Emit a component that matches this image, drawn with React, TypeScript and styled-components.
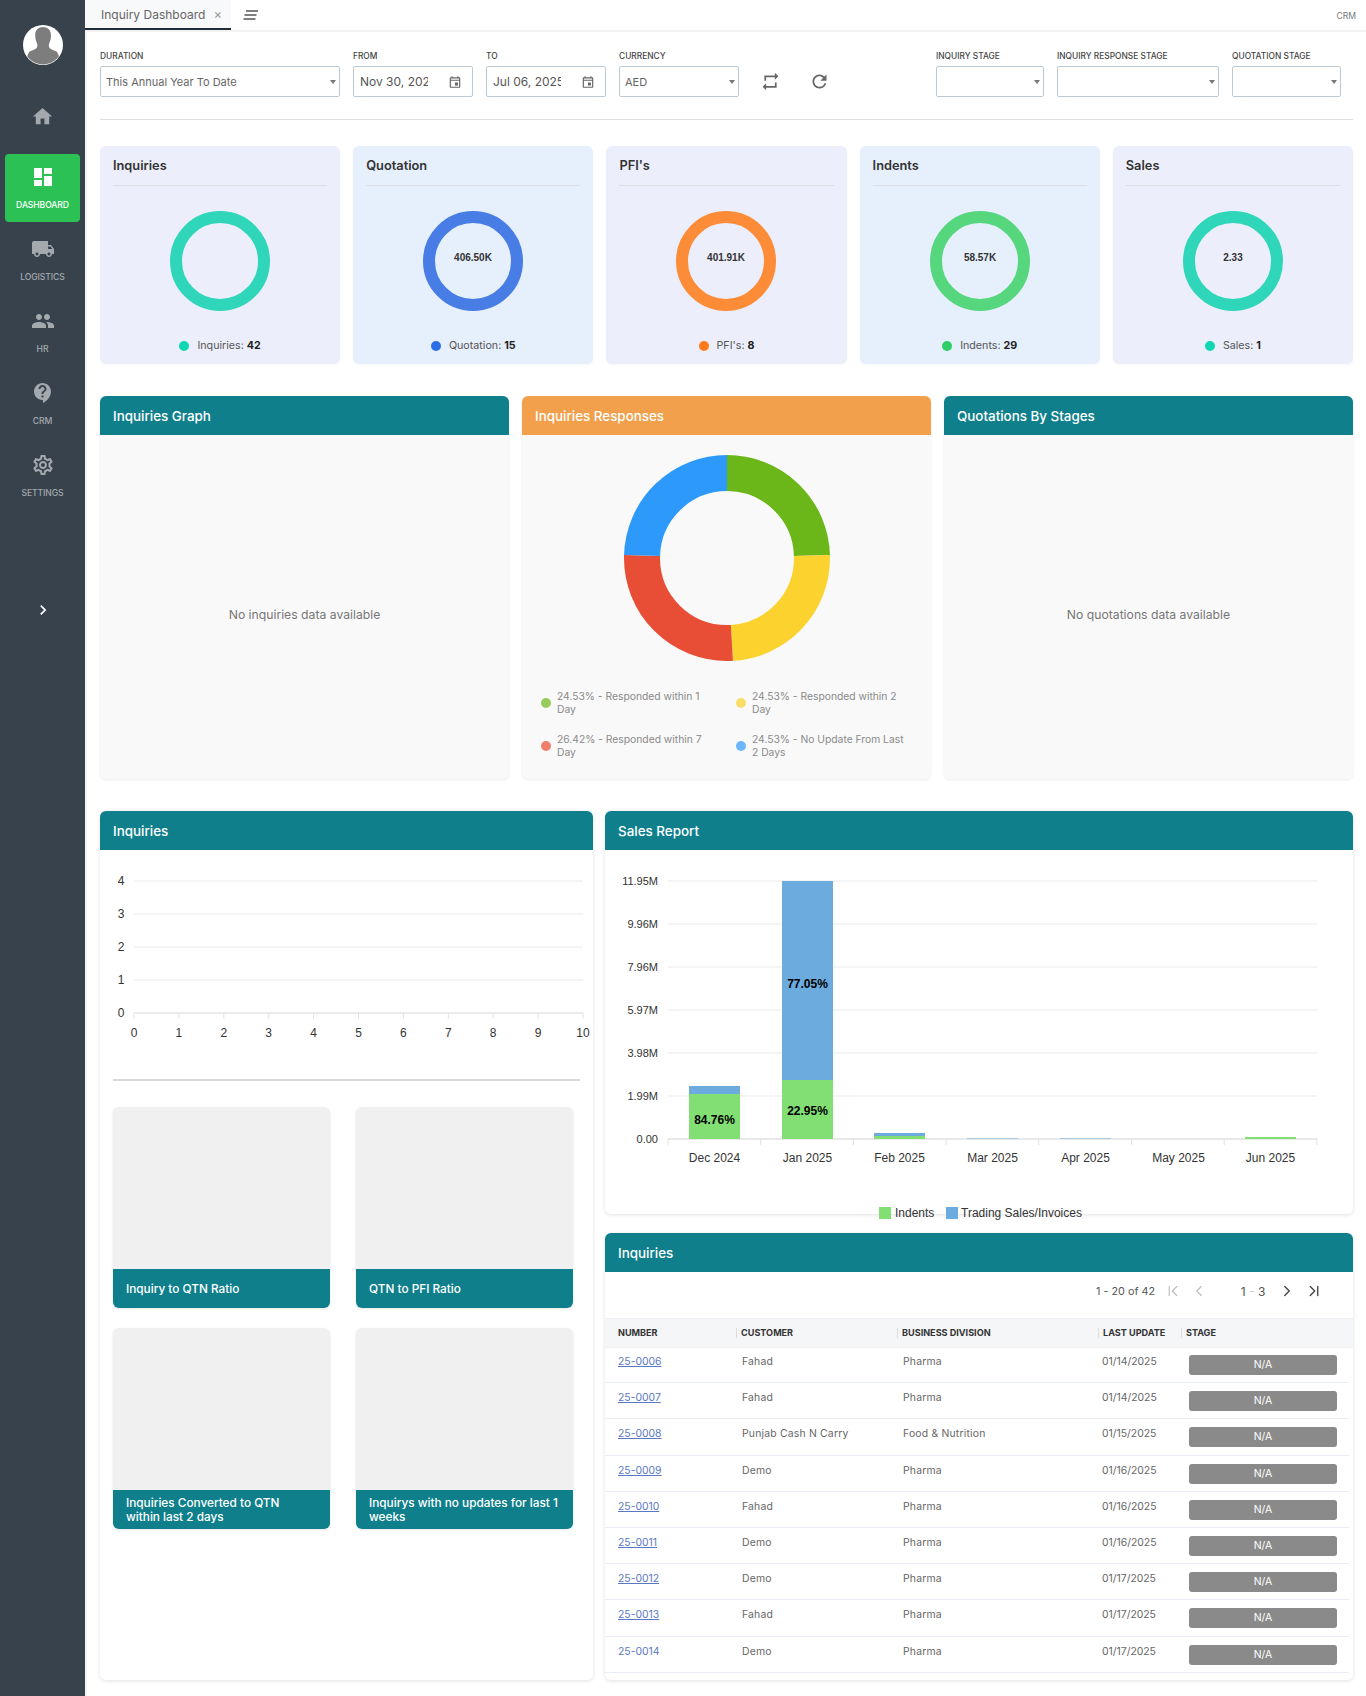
import React from "react";
import styled, { createGlobalStyle } from "styled-components";
import { ChevronFirst, ChevronLast, ChevronLeft, ChevronRight } from "lucide-react";
import {
  MdChevronRight,
  MdContactSupport,
  MdDashboard,
  MdHome,
  MdLocalShipping,
  MdOutlineEvent,
  MdOutlineSettings,
  MdPeople,
  MdRefresh,
  MdRepeat,
} from "react-icons/md";

const TEAL = "#107f8c";
const UI_FONT = `"Inter", "Noto Sans", sans-serif`;
const CHART_FONT = `"Liberation Sans", Arial, sans-serif`;

const GlobalStyle = createGlobalStyle`
  html, body {
    margin: 0;
    background: #fff;
  }
  body {
    font-family: ${UI_FONT};
    color: #333;
  }
  * {
    box-sizing: border-box;
  }
`;

const Shell = styled.div`
  display: flex;
  width: 1366px;
  min-height: 1696px;
`;

const Sidebar = styled.aside`
  flex: 0 0 85px;
  display: flex;
  flex-direction: column;
  align-items: center;
  background: #37424c;
  padding-top: 25px;
`;

const Avatar = styled.svg`
  width: 40px;
  height: 40px;
  margin-bottom: 34px;
`;

const NavItem = styled.div<{ $active?: boolean }>`
  width: 75px;
  height: 68px;
  margin-bottom: 4px;
  display: flex;
  flex-direction: column;
  align-items: center;
  justify-content: flex-start;
  padding-top: 11px;
  border-radius: 4px;
  background: ${({ $active }) => ($active ? "#2bc155" : "transparent")};
  color: ${({ $active }) => ($active ? "#fff" : "#a4a9ae")};
  font-size: 8.6px;
  font-weight: 500;
  letter-spacing: -0.1px;

  svg {
    display: block;
    margin-bottom: 11px;
  }
`;

const HomeLink = styled.div`
  height: 34px;
  margin-bottom: 21px;
  color: #a4a9ae;
  display: flex;
  align-items: center;
`;

const Collapse = styled.div`
  margin-top: 86px;
  color: #fff;
  display: flex;
`;

const Main = styled.main`
  flex: 1;
  min-width: 0;
  display: flex;
  flex-direction: column;
`;

const TopBar = styled.header`
  height: 32px;
  display: flex;
  align-items: flex-start;
  border-bottom: 2px solid #f3f3f3;
  padding-right: 10px;
`;

const Tab = styled.div`
  width: 146px;
  height: 30px;
  display: flex;
  align-items: center;
  padding-left: 16px;
  gap: 8px;
  background: #f8f9fa;
  border-bottom: 2px solid #1f2d3a;
  font-size: 12px;
  color: #666;
  white-space: nowrap;
`;

const TabClose = styled.span`
  font-size: 13px;
  color: #999;
  line-height: 1;
`;

const TabMenu = styled.svg`
  width: 16px;
  height: 10px;
  margin: 10px 0 0 12px;
`;

const ModuleName = styled.span`
  margin-left: auto;
  padding-top: 11px;
  font-size: 8.6px;
  color: #777;
`;

const Content = styled.div`
  flex: 1;
  border-left: 2px solid #f5f5f5;
  padding: 0 13px;
`;

const Filters = styled.div`
  display: flex;
  padding: 19px 12px 22px 0;
  border-bottom: 1px solid #dcdfe2;
`;

const FilterGroup = styled.div`
  display: flex;
  gap: 13px;
`;

const RightFilters = styled(FilterGroup)`
  margin-left: auto;
`;

const Field = styled.div<{ $width: number }>`
  width: ${({ $width }) => $width}px;
`;

const FieldLabel = styled.div`
  height: 11px;
  margin-bottom: 4px;
  font-size: 8.4px;
  line-height: 11px;
  font-weight: 500;
  color: #444;
  white-space: nowrap;
`;

const Control = styled.div`
  height: 31px;
  display: flex;
  align-items: center;
  padding: 0 6px 0 5px;
  border: 1px solid #bccad6;
  border-radius: 2px;
  font-size: 11px;
  color: #666;
  white-space: nowrap;
`;

const Caret = styled.span`
  margin: 0 -3px 0 auto;
  border-left: 3.5px solid transparent;
  border-right: 3.5px solid transparent;
  border-top: 4px solid #777;
`;

const DateValue = styled.span`
  width: 68px;
  margin-left: 1px;
  overflow: hidden;
  font-size: 12px;
  color: #555;
`;

const DateIcon = styled.span`
  margin-left: auto;
  margin-right: 4px;
  display: flex;
  color: #666;
`;

const Actions = styled.div`
  display: flex;
  align-items: center;
  gap: 28px;
  margin: 15px 0 0 21px;
  color: #666;
`;

const SummaryRow = styled.section`
  display: grid;
  grid-template-columns: repeat(5, 1fr);
  gap: 13px;
  margin-top: 26px;
`;

const SummaryCard = styled.div<{ $tint: string }>`
  height: 218px;
  padding: 0 13px;
  display: flex;
  flex-direction: column;
  align-items: center;
  border-radius: 6px;
  background: ${({ $tint }) => $tint};
  box-shadow: 0 1px 3px rgba(0, 0, 0, 0.04);
`;

const SummaryTitle = styled.div`
  width: 100%;
  height: 40px;
  padding-top: 11px;
  font-size: 12.8px;
  line-height: 18px;
  font-weight: 600;
  color: #333;
  border-bottom: 1px solid #dcdfe6;
`;

const Ring = styled.svg`
  width: 100px;
  height: 100px;
  margin-top: 25px;
`;

const SummaryLegend = styled.div`
  margin-top: 28px;
  display: flex;
  align-items: center;
  gap: 8px;
  font-size: 10.7px;
  color: #555;

  b {
    color: #222;
    font-weight: 700;
  }
`;

const Dot = styled.span<{ $color: string; $size?: number }>`
  flex: none;
  width: ${({ $size }) => $size ?? 10}px;
  height: ${({ $size }) => $size ?? 10}px;
  border-radius: 50%;
  background: ${({ $color }) => $color};
`;

const GraphRow = styled.section`
  display: grid;
  grid-template-columns: repeat(3, 1fr);
  gap: 13px;
  margin-top: 32px;
`;

const GraphPanel = styled.div`
  height: 383px;
  display: flex;
  flex-direction: column;
  background: #f9f9f9;
  border-radius: 6px;
  box-shadow: 0 1px 3px rgba(0, 0, 0, 0.08);
`;

const PanelHeader = styled.div<{ $color?: string }>`
  flex: none;
  height: 39px;
  display: flex;
  align-items: center;
  padding: 0 13px;
  border-radius: 6px 6px 0 0;
  background: ${({ $color }) => $color ?? TEAL};
  color: #fff;
  font-size: 13.4px;
  font-weight: 500;
`;

const EmptyBody = styled.div`
  flex: 1;
  display: flex;
  align-items: center;
  justify-content: center;
  padding-top: 14px;
  font-size: 12.2px;
  color: #777;
`;

const ResponseBody = styled.div`
  flex: 1;
  display: flex;
  flex-direction: column;
  align-items: center;
  padding-top: 20px;
`;

const ResponseDonut = styled.svg`
  width: 206px;
  height: 206px;
`;

const ResponseLegend = styled.div`
  width: 100%;
  margin-top: 29px;
  padding-left: 19px;
  display: grid;
  grid-template-columns: 195px 195px;
  row-gap: 17px;
`;

const ResponseItem = styled.div`
  display: flex;
  align-items: center;
  gap: 6px;
  font-size: 10.3px;
  line-height: 13px;
  color: #8a8a8a;
  white-space: nowrap;
`;

const LowerRow = styled.section`
  display: grid;
  grid-template-columns: 493px 748px;
  gap: 12px;
  margin-top: 32px;
`;

const Panel = styled.div`
  background: #fff;
  border-radius: 6px;
  box-shadow: 0 1px 4px rgba(0, 0, 0, 0.12);
`;

const LeftPanel = styled(Panel)`
  height: 869px;
`;

const ChartSvg = styled.svg`
  display: block;
  overflow: visible;
  font-family: ${CHART_FONT};
`;

const Divider = styled.hr`
  margin: 4px 13px 0;
  border: 0;
  border-top: 2px solid #d8d8d8;
  width: 467px;
`;

const RatioGrid = styled.div`
  display: grid;
  grid-template-columns: 217px 217px;
  column-gap: 26px;
  row-gap: 20px;
  padding: 26px 13px 0;
`;

const RatioCard = styled.div`
  height: 201px;
  display: flex;
  flex-direction: column;
  justify-content: flex-end;
  background: #f0f0f0;
  border-radius: 6px;
  box-shadow: 0 1px 3px rgba(0, 0, 0, 0.1);
`;

const RatioCaption = styled.div`
  height: 39px;
  display: flex;
  align-items: center;
  padding: 0 13px;
  background: ${TEAL};
  border-radius: 0 0 6px 6px;
  color: #fff;
  font-size: 11.8px;
  line-height: 14px;
  font-weight: 500;
  white-space: nowrap;
`;

const RightColumn = styled.div`
  display: flex;
  flex-direction: column;
  gap: 19px;
`;

const SalesPanel = styled(Panel)`
  height: 403px;
`;

const TablePanel = styled(Panel)`
  height: 447px;
`;

const Pager = styled.div`
  height: 47px;
  display: flex;
  align-items: center;
  justify-content: flex-end;
  padding: 0 30px 8px 0;
  font-size: 10.8px;
  color: #555;
  border-bottom: 1px solid #eef0f3;
`;

const PagerRange = styled.span`
  margin-right: 9px;
`;

const PagerIcon = styled.span<{ $disabled?: boolean; $gap?: number }>`
  display: flex;
  color: ${({ $disabled }) => ($disabled ? "#bbb" : "#444")};
  margin-left: ${({ $gap }) => $gap ?? 8}px;
`;

const PagerPages = styled.span`
  width: 70px;
  padding-left: 20px;
  text-align: center;
  font-size: 12px;
`;

const PagerDash = styled.span`
  color: #ccc;
`;

const TableHead = styled.div`
  display: grid;
  grid-template-columns: 131px 161px 201px 83px 1fr;
  height: 28px;
  align-items: center;
  background: #f5f6f8;
  box-shadow: 0 1px 1px rgba(0, 0, 0, 0.05);
  font-size: 9.1px;
  font-weight: 700;
  color: #333;
`;

const HeadCell = styled.div<{ $first?: boolean }>`
  height: 10px;
  line-height: 10px;
  padding-left: ${({ $first }) => ($first ? "13px" : "4px")};
  border-left: ${({ $first }) => ($first ? "0" : "1px solid #ddd")};
  white-space: nowrap;
`;

const TableRow = styled.div`
  display: grid;
  grid-template-columns: 135px 161px 199px 85px 1fr;
  height: 36.2px;
  margin-right: 4px;
  border-bottom: 1px solid #e8eef4;
  font-size: 10.4px;
  line-height: 14px;
  color: #666;
`;

const Cell = styled.div`
  padding: 8px 0 0 2px;
  letter-spacing: 0.2px;
  white-space: nowrap;
`;

const DateCell = styled(Cell)`
  letter-spacing: 0;
`;

const NumberCell = styled(Cell)`
  padding-left: 13px;
  letter-spacing: 0;
`;

const InquiryLink = styled.span<{ $plain?: boolean }>`
  color: #5a78c4;
  text-decoration: ${({ $plain }) => ($plain ? "none" : "underline")};
`;

const StageBadge = styled.div`
  width: 148px;
  height: 20px;
  margin: 8px 0 0 4px;
  display: flex;
  align-items: center;
  justify-content: center;
  background: #8a8a8a;
  border-radius: 3px;
  color: #fff;
  font-size: 10.4px;
`;

const summaries = [
  { title: "Inquiries", tint: "#eceffb", ring: "#2fd6b9", dot: "#10d7b2", label: "Inquiries:", count: 42 },
  { title: "Quotation", tint: "#e6effc", ring: "#477de5", dot: "#2a6fe8", label: "Quotation:", count: 15, value: "406.50K" },
  { title: "PFI's", tint: "#eceffb", ring: "#fd8c38", dot: "#ff7a1a", label: "PFI's:", count: 8, value: "401.91K" },
  { title: "Indents", tint: "#e6effc", ring: "#56d77e", dot: "#2dcf66", label: "Indents:", count: 29, value: "58.57K" },
  { title: "Sales", tint: "#eceffb", ring: "#2fd6b9", dot: "#10d7b2", label: "Sales:", count: 1, value: "2.33" },
];

const responseSlices = [
  { color: "#6bb618", pct: 24.53 },
  { color: "#fcd22f", pct: 24.53 },
  { color: "#e84e36", pct: 26.42 },
  { color: "#2d99fb", pct: 24.52 },
];

const responseLegend = [
  { color: "#97cd5d", lines: ["24.53% - Responded within 1", "Day"] },
  { color: "#fade68", lines: ["24.53% - Responded within 2", "Day"] },
  { color: "#ee7f6d", lines: ["26.42% - Responded within 7", "Day"] },
  { color: "#6cb6fb", lines: ["24.53% - No Update From Last", "2 Days"] },
];

const ratios = [
  ["Inquiry to QTN Ratio"],
  ["QTN to PFI Ratio"],
  ["Inquiries Converted to QTN", "within last 2 days"],
  ["Inquirys with no updates for last 1", "weeks"],
];

const rows = [
  ["25-0006", "Fahad", "Pharma", "01/14/2025"],
  ["25-0007", "Fahad", "Pharma", "01/14/2025"],
  ["25-0008", "Punjab Cash N Carry", "Food & Nutrition", "01/15/2025"],
  ["25-0009", "Demo", "Pharma", "01/16/2025"],
  ["25-0010", "Fahad", "Pharma", "01/16/2025"],
  ["25-0011", "Demo", "Pharma", "01/16/2025"],
  ["25-0012", "Demo", "Pharma", "01/17/2025"],
  ["25-0013", "Fahad", "Pharma", "01/17/2025"],
  ["25-0014", "Demo", "Pharma", "01/17/2025"],
];

const salesAxis = ["11.95M", "9.96M", "7.96M", "5.97M", "3.98M", "1.99M", "0.00"];

// bar coordinates are relative to the panel body, top = top of the bar, split = where green starts
const salesBars = [
  { month: "Dec 2024", x: 84, top: 236, split: 244, green: "84.76%", greenY: 274 },
  { month: "Jan 2025", x: 177, top: 31, split: 230, green: "22.95%", greenY: 265, blue: "77.05%" },
  { month: "Feb 2025", x: 269, top: 283, split: 286 },
  { month: "Mar 2025", x: 362, top: 288.5, split: 289 },
  { month: "Apr 2025", x: 455, top: 288.5, split: 289 },
  { month: "May 2025", x: 548, top: 289, split: 289 },
  { month: "Jun 2025", x: 640, top: 287, split: 287 },
];

const InquiriesChart = () => {
  const xs = Array.from({ length: 11 }, (_, i) => 34 + i * 44.9);
  return (
    <ChartSvg width={493} height={225}>
      {[4, 3, 2, 1].map((v, i) => (
        <line key={v} x1={34} x2={483} y1={31 + i * 33} y2={31 + i * 33} stroke="#f0f0f0" strokeWidth={1.5} />
      ))}
      <line x1={34} x2={483} y1={163} y2={163} stroke="#e4e4e4" strokeWidth={1.5} />
      {[4, 3, 2, 1, 0].map((v, i) => (
        <text key={v} x={21} y={35 + i * 33} fontSize={12} fill="#333" textAnchor="middle">
          {v}
        </text>
      ))}
      {xs.map((x, i) => (
        <g key={i}>
          <line x1={x} x2={x} y1={163} y2={169} stroke="#e4e4e4" />
          <text x={x} y={187} fontSize={12} fill="#333" textAnchor="middle">
            {i}
          </text>
        </g>
      ))}
    </ChartSvg>
  );
};

const SalesChart = () => (
  <ChartSvg width={748} height={364}>
    {salesAxis.map((label, i) => (
      <g key={label}>
        <line
          x1={63}
          x2={712}
          y1={31 + i * 43}
          y2={31 + i * 43}
          stroke={i === 6 ? "#e0e0e0" : "#f0f0f0"}
          strokeWidth={1.5}
        />
        <text x={53} y={35 + i * 43} fontSize={11} fill="#333" textAnchor="end">
          {label}
        </text>
      </g>
    ))}
    {Array.from({ length: 8 }, (_, i) => 63 + i * 92.7).map((x) => (
      <line key={x} x1={x} x2={x} y1={289} y2={295} stroke="#e0e0e0" />
    ))}
    {salesBars.map((bar) => (
      <g key={bar.month}>
        <rect x={bar.x} y={bar.top} width={51} height={bar.split - bar.top} fill="#6cabdd" />
        <rect x={bar.x} y={bar.split} width={51} height={289 - bar.split} fill="#82df74" />
        {bar.blue && (
          <text x={bar.x + 25.5} y={138} fontSize={12} fontWeight={700} fill="#000" textAnchor="middle">
            {bar.blue}
          </text>
        )}
        {bar.green && (
          <text x={bar.x + 25.5} y={bar.greenY} fontSize={12} fontWeight={700} fill="#000" textAnchor="middle">
            {bar.green}
          </text>
        )}
        <text x={bar.x + 25.5} y={312} fontSize={12} fill="#333" textAnchor="middle">
          {bar.month}
        </text>
      </g>
    ))}
    <rect x={274} y={357} width={12} height={12} fill="#82df74" />
    <text x={290} y={367} fontSize={12} fill="#333">
      Indents
    </text>
    <rect x={341} y={357} width={12} height={12} fill="#6cabdd" />
    <text x={356} y={367} fontSize={12} fill="#333">
      Trading Sales/Invoices
    </text>
  </ChartSvg>
);

const App = () => {
  let offset = 0;
  return (
    <Shell>
      <GlobalStyle />
      <Sidebar>
        <Avatar viewBox="0 0 40 40">
          <defs>
            <clipPath id="avatar-clip">
              <circle cx="20" cy="20" r="19.5" />
            </clipPath>
          </defs>
          <circle cx="20" cy="20" r="20" fill="#fff" />
          <path
            clipPath="url(#avatar-clip)"
            d="M20 2c-5.500 0-8 3.800-7.800 8.800.1 3 .7 5.200 1.500 7 .7 1.500 1 3.300.2 4.600-1 1.700-4.100 2.600-6.300 3.700-1.700.9-2.800 2.700-3.500 6.400V40h32v-7.500c-.7-3.700-1.800-5.500-3.500-6.400-2.200-1.100-5.300-2-6.300-3.700-.8-1.300-.5-3.100.2-4.600.8-1.800 1.400-4 1.500-7C28 5.800 25.500 2 20 2z"
            fill="#7d7d7d"
          />
        </Avatar>
        <HomeLink>
          <MdHome size={23} />
        </HomeLink>
        <NavItem $active>
          <MdDashboard size={24} />
          DASHBOARD
        </NavItem>
        <NavItem>
          <MdLocalShipping size={24} />
          LOGISTICS
        </NavItem>
        <NavItem>
          <MdPeople size={24} />
          HR
        </NavItem>
        <NavItem>
          <MdContactSupport size={24} />
          CRM
        </NavItem>
        <NavItem>
          <MdOutlineSettings size={24} />
          SETTINGS
        </NavItem>
        <Collapse>
          <MdChevronRight size={20} />
        </Collapse>
      </Sidebar>
      <Main>
        <TopBar>
          <Tab>
            Inquiry Dashboard
            <TabClose>×</TabClose>
          </Tab>
          <TabMenu viewBox="0 0 16 10">
            <path d="M3 1h12M1.500 5h12M0.500 9h12" stroke="#555" strokeWidth="1.300" fill="none" />
          </TabMenu>
          <ModuleName>CRM</ModuleName>
        </TopBar>
        <Content>
          <Filters>
            <FilterGroup>
              <Field $width={240}>
                <FieldLabel>DURATION</FieldLabel>
                <Control>
                  This Annual Year To Date
                  <Caret />
                </Control>
              </Field>
              <Field $width={120}>
                <FieldLabel>FROM</FieldLabel>
                <Control>
                  <DateValue>Nov 30, 2024</DateValue>
                  <DateIcon>
                    <MdOutlineEvent size={14} />
                  </DateIcon>
                </Control>
              </Field>
              <Field $width={120}>
                <FieldLabel>TO</FieldLabel>
                <Control>
                  <DateValue>Jul 06, 2025</DateValue>
                  <DateIcon>
                    <MdOutlineEvent size={14} />
                  </DateIcon>
                </Control>
              </Field>
              <Field $width={120}>
                <FieldLabel>CURRENCY</FieldLabel>
                <Control>
                  AED
                  <Caret />
                </Control>
              </Field>
            </FilterGroup>
            <Actions>
              <MdRepeat size={21} />
              <MdRefresh size={21} />
            </Actions>
            <RightFilters>
              <Field $width={108}>
                <FieldLabel>INQUIRY STAGE</FieldLabel>
                <Control>
                  <Caret />
                </Control>
              </Field>
              <Field $width={162}>
                <FieldLabel>INQUIRY RESPONSE STAGE</FieldLabel>
                <Control>
                  <Caret />
                </Control>
              </Field>
              <Field $width={109}>
                <FieldLabel>QUOTATION STAGE</FieldLabel>
                <Control>
                  <Caret />
                </Control>
              </Field>
            </RightFilters>
          </Filters>

          <SummaryRow>
            {summaries.map((s) => (
              <SummaryCard key={s.title} $tint={s.tint}>
                <SummaryTitle>{s.title}</SummaryTitle>
                <Ring viewBox="0 0 100 100">
                  <circle cx="50" cy="50" r="44" fill="none" stroke={s.ring} strokeWidth="12" />
                  {s.value && (
                    <text
                      x="50"
                      y="50"
                      fontFamily={CHART_FONT}
                      fontSize="10"
                      fontWeight="700"
                      fill="#333"
                      textAnchor="middle"
                    >
                      {s.value}
                    </text>
                  )}
                </Ring>
                <SummaryLegend>
                  <Dot $color={s.dot} />
                  <span>
                    {s.label} <b>{s.count}</b>
                  </span>
                </SummaryLegend>
              </SummaryCard>
            ))}
          </SummaryRow>

          <GraphRow>
            <GraphPanel>
              <PanelHeader>Inquiries Graph</PanelHeader>
              <EmptyBody>No inquiries data available</EmptyBody>
            </GraphPanel>
            <GraphPanel>
              <PanelHeader $color="#f2a04c">Inquiries Responses</PanelHeader>
              <ResponseBody>
                <ResponseDonut viewBox="0 0 206 206">
                  {responseSlices.map((slice) => {
                    const start = offset;
                    offset += slice.pct;
                    return (
                      <circle
                        key={slice.color}
                        cx="103"
                        cy="103"
                        r="85"
                        fill="none"
                        stroke={slice.color}
                        strokeWidth="36"
                        pathLength={100}
                        strokeDasharray={`${slice.pct} ${100 - slice.pct}`}
                        strokeDashoffset={-start}
                        transform="rotate(-90 103 103)"
                      />
                    );
                  })}
                </ResponseDonut>
                <ResponseLegend>
                  {responseLegend.map((item) => (
                    <ResponseItem key={item.lines[0]}>
                      <Dot $color={item.color} $size={10} />
                      <span>
                        {item.lines[0]}
                        <br />
                        {item.lines[1]}
                      </span>
                    </ResponseItem>
                  ))}
                </ResponseLegend>
              </ResponseBody>
            </GraphPanel>
            <GraphPanel>
              <PanelHeader>Quotations By Stages</PanelHeader>
              <EmptyBody>No quotations data available</EmptyBody>
            </GraphPanel>
          </GraphRow>

          <LowerRow>
            <LeftPanel>
              <PanelHeader>Inquiries</PanelHeader>
              <InquiriesChart />
              <Divider />
              <RatioGrid>
                {ratios.map((lines) => (
                  <RatioCard key={lines[0]}>
                    <RatioCaption>
                      <span>
                        {lines[0]}
                        {lines[1] && <br />}
                        {lines[1]}
                      </span>
                    </RatioCaption>
                  </RatioCard>
                ))}
              </RatioGrid>
            </LeftPanel>
            <RightColumn>
              <SalesPanel>
                <PanelHeader>Sales Report</PanelHeader>
                <SalesChart />
              </SalesPanel>
              <TablePanel>
                <PanelHeader>Inquiries</PanelHeader>
                <Pager>
                  <PagerRange>1 - 20 of 42</PagerRange>
                  <PagerIcon $disabled $gap={0}>
                    <ChevronFirst size={18} strokeWidth={1.5} />
                  </PagerIcon>
                  <PagerIcon $disabled>
                    <ChevronLeft size={18} strokeWidth={1.5} />
                  </PagerIcon>
                  <PagerPages>
                    1 <PagerDash>-</PagerDash> 3
                  </PagerPages>
                  <PagerIcon $gap={0}>
                    <ChevronRight size={18} strokeWidth={1.8} />
                  </PagerIcon>
                  <PagerIcon $gap={9}>
                    <ChevronLast size={18} strokeWidth={1.8} />
                  </PagerIcon>
                </Pager>
                <TableHead>
                  <HeadCell $first>NUMBER</HeadCell>
                  <HeadCell>CUSTOMER</HeadCell>
                  <HeadCell>BUSINESS DIVISION</HeadCell>
                  <HeadCell>LAST UPDATE</HeadCell>
                  <HeadCell>STAGE</HeadCell>
                </TableHead>
                {rows.map((row, i) => (
                  <TableRow key={row[0]}>
                    <NumberCell>
                      <InquiryLink $plain={i === rows.length - 1}>{row[0]}</InquiryLink>
                    </NumberCell>
                    <Cell>{row[1]}</Cell>
                    <Cell>{row[2]}</Cell>
                    <DateCell>{row[3]}</DateCell>
                    <StageBadge>N/A</StageBadge>
                  </TableRow>
                ))}
              </TablePanel>
            </RightColumn>
          </LowerRow>
        </Content>
      </Main>
    </Shell>
  );
};

export default App;
